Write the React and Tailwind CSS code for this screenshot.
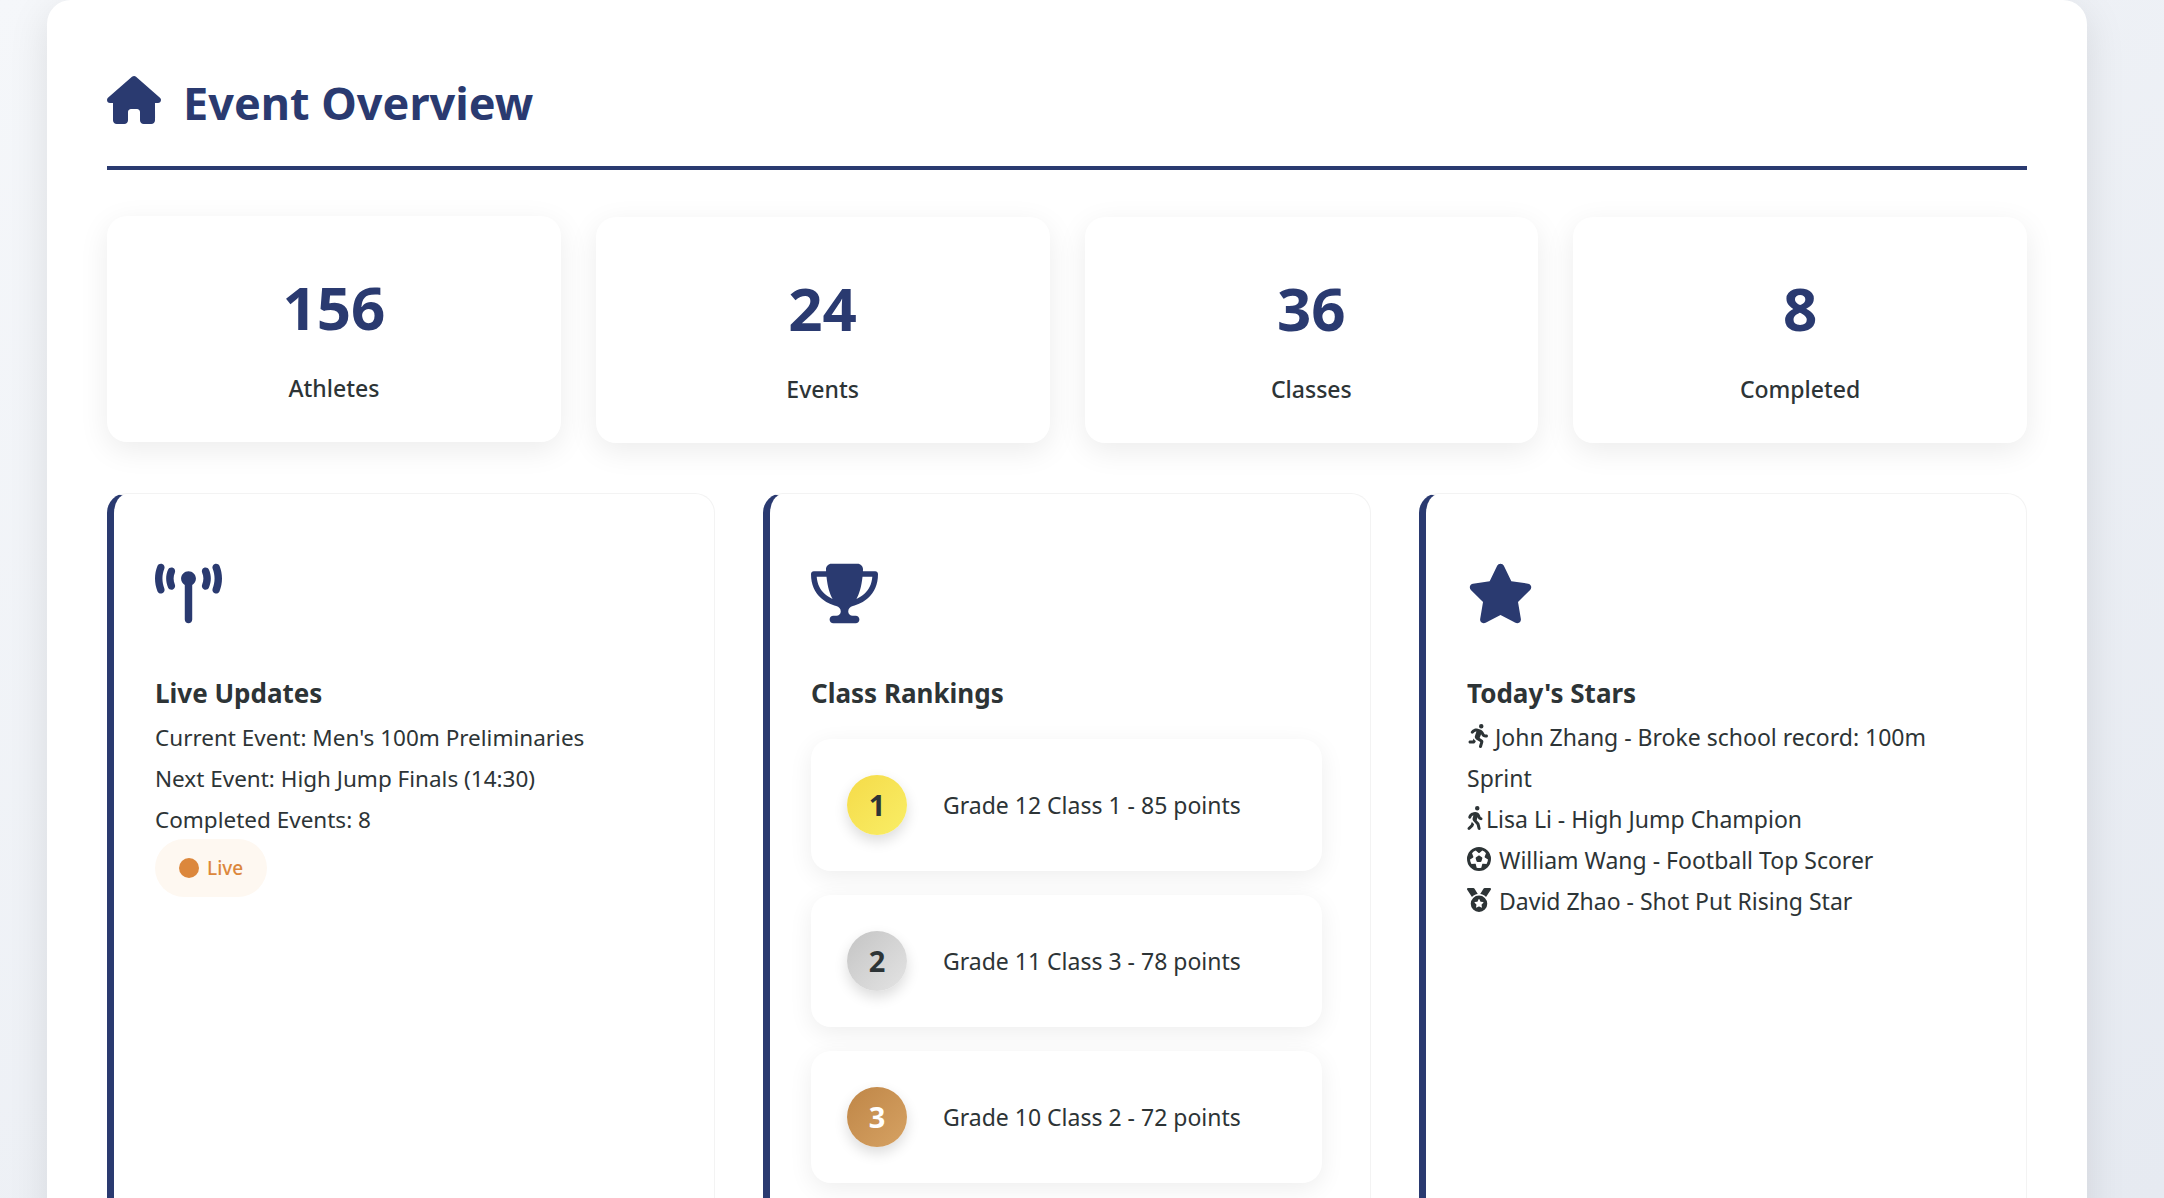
import React from 'react';
import { FaHouse, FaTowerBroadcast, FaTrophy, FaStar, FaPersonRunning, FaPersonWalking, FaFutbol, FaMedal } from 'react-icons/fa6';

const stats = [
  { value: '156', label: 'Athletes', lift: true },
  { value: '24', label: 'Events' },
  { value: '36', label: 'Classes' },
  { value: '8', label: 'Completed' },
];

const rankings = [
  { rank: 1, text: 'Grade 12 Class 1 - 85 points', badge: 'from-[#f5db48] to-[#f9ee66] text-[#2d3436]' },
  { rank: 2, text: 'Grade 11 Class 3 - 78 points', badge: 'from-[#c4c4c4] to-[#e4e4e4] text-[#2d3436]' },
  { rank: 3, text: 'Grade 10 Class 2 - 72 points', badge: 'from-[#bf8647] to-[#d6a263] text-white' },
];

const FeatureCard = ({ icon, title, children }) => (
  <div className="h-[800px] rounded-[20px] border border-[#f3f3f3] border-l-[7px] border-l-[#2a3a70] bg-white pl-[41px] pr-[48px] pt-[66px]">
    <div className="h-[60px] text-[67px] text-[#2a3a70]">{icon}</div>
    <h3 className="mt-[55px] text-[26px] leading-[36px] font-bold text-[#2d3436]">{title}</h3>
    {children}
  </div>
);

const Line = ({ children, className = 'text-[23px]' }) => <p className={`leading-[41px] text-[#2d3436] ${className}`}>{children}</p>;

export default function App() {
  return (
    <div className="h-[1198px] overflow-hidden bg-gradient-to-br from-[#f5f7fa] to-[#e6eaf1] font-['Noto_Sans','Open_Sans',sans-serif]">
      <div className="ml-[47px] h-[1300px] w-[2040px] rounded-[24px] bg-white px-[60px] pt-[50px] shadow-[0_10px_40px_rgba(0,0,0,0.1)]">
        <div className="flex h-[120px] items-center gap-[22px] border-b-4 border-[#2a3a70] pb-[16px]">
          <FaHouse className="text-[54px] text-[#2a3a70]" />
          <h1 className="pt-[5px] text-[45px] leading-[60px] font-bold text-[#2a3a70]">Event Overview</h1>
        </div>

        <div className="mt-[47px] grid grid-cols-4 gap-[35px]">
          {stats.map((s) => (
            <div key={s.label} className={`flex h-[226px] flex-col items-center rounded-[20px] bg-white pt-[56px] shadow-[0_8px_30px_rgba(0,0,0,0.08)] ${s.lift ? '-translate-y-px' : ''}`}>
              <div className="text-[60px] leading-[70px] font-bold text-[#2a3a70]">{s.value}</div>
              <div className="mt-[28px] text-[23px] leading-[36px] font-medium text-[#2d3436]">{s.label}</div>
            </div>
          ))}
        </div>

        <div className="mt-[50px] grid grid-cols-3 gap-[48px]">
          <FeatureCard icon={<FaTowerBroadcast />} title="Live Updates">
            <div className="mt-[6px]">
              <Line className="text-[22.5px]">Current Event: Men's 100m Preliminaries</Line>
              <Line className="text-[22.5px]">Next Event: High Jump Finals (14:30)</Line>
              <Line className="text-[22.5px]">Completed Events: 8</Line>
            </div>
            <div className="-mt-px inline-flex h-[58px] items-center gap-[8px] rounded-full bg-[#fef8f1] px-[24px] text-[19px] font-medium text-[#dc873c]">
              <span className="h-[20px] w-[20px] rounded-full bg-[#dc873c]" />
              Live
            </div>
          </FeatureCard>

          <FeatureCard icon={<FaTrophy />} title="Class Rankings">
            <div className="mt-[28px] flex flex-col gap-[24px]">
              {rankings.map((r) => (
                <div key={r.rank} className="flex h-[132px] items-center gap-[36px] rounded-[20px] bg-white px-[36px] shadow-[0_6px_24px_rgba(0,0,0,0.07)]">
                  <div className={`flex h-[60px] w-[60px] items-center justify-center rounded-full bg-gradient-to-br text-[29px] font-bold shadow-[0_6px_14px_rgba(0,0,0,0.14)] ${r.badge}`}>{r.rank}</div>
                  <span className="text-[23px] text-[#2d3436]">{r.text}</span>
                </div>
              ))}
            </div>
          </FeatureCard>

          <FeatureCard icon={<FaStar />} title="Today's Stars">
            <div className="mt-[6px]">
              <Line><FaPersonRunning className="mr-[4px] inline align-[-2px] text-[24px]" />John Zhang - Broke school record: 100m Sprint</Line>
              <Line><FaPersonWalking className="mr-[3px] inline w-[16px] align-[-2px] text-[24px]" />Lisa Li - High Jump Champion</Line>
              <Line><FaFutbol className="mr-[8px] inline align-[-2px] text-[24px]" />William Wang - Football Top Scorer</Line>
              <Line><FaMedal className="mr-[8px] inline align-[-2px] text-[24px]" />David Zhao - Shot Put Rising Star</Line>
            </div>
          </FeatureCard>
        </div>
      </div>
    </div>
  );
}
